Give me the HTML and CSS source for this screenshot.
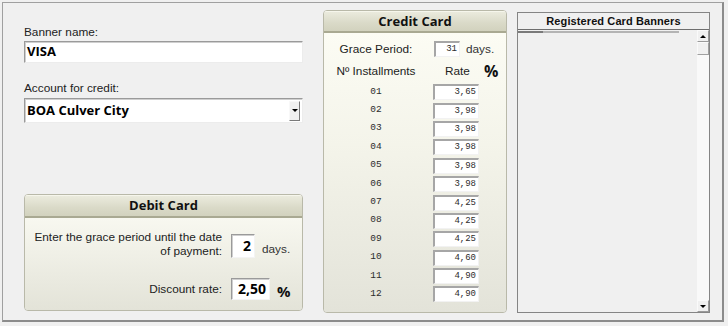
FILE: index.html
```html
<!DOCTYPE html>
<html>
<head>
<meta charset="utf-8">
<title>Card Banners</title>
<link rel="stylesheet" href="styles.css">
</head>
<body>
<div class="frame">
  <div class="left">
    <div class="lbl">Banner name:</div>
    <div class="field field-name">VISA</div>
    <div class="lbl lbl-account">Account for credit:</div>
    <div class="field combo">
      <span class="combo-text">BOA Culver City</span>
      <span class="combo-btn"><span class="arrow-down"></span></span>
    </div>

    <div class="panel debit">
      <div class="panel-head">Debit Card</div>
      <div class="debit-body">
        <div class="dlabel">Enter the grace period until the date<br>of payment:</div>
        <div class="dval">
          <div class="box box-days">2</div>
          <span class="unit">days.</span>
        </div>
        <div class="dlabel dlabel-rate">Discount rate:</div>
        <div class="dval dval-rate">
          <div class="box box-rate">2,50</div>
          <span class="unit pct">%</span>
        </div>
      </div>
    </div>
  </div>

  <div class="panel credit">
    <div class="panel-head">Credit Card</div>
    <div class="credit-body">
      <div class="crow crow-grace">
        <div class="ccol1">Grace Period:</div>
        <div class="grace-val">
          <div class="mini mini-grace">31</div>
          <span class="unit">days.</span>
        </div>
      </div>
      <div class="crow crow-head">
        <div class="ccol1">Nº Installments</div>
        <div class="ccol2 rate-head">Rate</div>
        <div class="ccol3 pct">%</div>
      </div>
      <div class="rates">
        <div class="rrow"><div class="ccol1 num">01</div><div class="mini">3,65</div></div>
        <div class="rrow"><div class="ccol1 num">02</div><div class="mini">3,98</div></div>
        <div class="rrow"><div class="ccol1 num">03</div><div class="mini">3,98</div></div>
        <div class="rrow"><div class="ccol1 num">04</div><div class="mini">3,98</div></div>
        <div class="rrow"><div class="ccol1 num">05</div><div class="mini">3,98</div></div>
        <div class="rrow"><div class="ccol1 num">06</div><div class="mini">3,98</div></div>
        <div class="rrow"><div class="ccol1 num">07</div><div class="mini">4,25</div></div>
        <div class="rrow"><div class="ccol1 num">08</div><div class="mini">4,25</div></div>
        <div class="rrow"><div class="ccol1 num">09</div><div class="mini">4,25</div></div>
        <div class="rrow"><div class="ccol1 num">10</div><div class="mini">4,60</div></div>
        <div class="rrow"><div class="ccol1 num">11</div><div class="mini">4,90</div></div>
        <div class="rrow"><div class="ccol1 num">12</div><div class="mini">4,90</div></div>
      </div>
    </div>
  </div>

  <div class="list">
    <div class="list-head">Registered Card Banners</div>
    <div class="list-rule"></div>
    <div class="list-body">
      <div class="list-items"></div>
      <div class="scroll">
        <div class="sbtn"><span class="arrow-up"></span></div>
        <div class="thumb"></div>
        <div class="track"></div>
        <div class="sbtn"><span class="arrow-down"></span></div>
      </div>
    </div>
  </div>
</div>
</body>
</html>
```

FILE: styles.css
```css
* {
  margin: 0;
  padding: 0;
  box-sizing: border-box;
}

body {
  background: #f0f0f0;
  font-family: "Liberation Sans", Arial, sans-serif;
  font-size: 11.8px;
  color: #222;
}

.frame {
  margin: 2px 0 0 2px;
  width: 722px;
  height: 320px;
  border: 1px solid #a0a0a0;
  border-right: 2px solid #8c8c8c;
  border-bottom: 2px solid #8c8c8c;
  box-shadow: 0 2px 0 #fafafa, 0 3px 0 #b4b4b4;
  display: flex;
  align-items: flex-start;
  padding: 7px 0 0 21px;
}

/* left column */

.left {
  width: 279px;
  margin-top: 15px;
  display: flex;
  flex-direction: column;
}

.lbl {
  line-height: 14px;
  height: 14px;
  color: #222;
}

.lbl-account {
  margin-top: 18px;
}

.field {
  background: #fff;
  border: 1px solid;
  border-color: #9a9a9a #ececec #ececec #9a9a9a;
  box-shadow: inset 1px 1px 0 #cfcfcf;
  font-family: "Open Sans", "DejaVu Sans", sans-serif;
  font-weight: 700;
  font-size: 13px;
  color: #000;
}

.field-name {
  margin-top: 2px;
  height: 22px;
  line-height: 19px;
  padding-left: 2px;
}

.combo {
  margin-top: 3px;
  height: 25px;
  display: flex;
  align-items: center;
  justify-content: space-between;
  padding-left: 2px;
}

.combo-text {
  line-height: 20px;
  margin-top: -1px;
}

.combo-btn {
  width: 11px;
  height: 20px;
  margin-right: 2px;
  background: #f0f0f0;
  border: 1px solid;
  border-color: #f8f8f8 #7a7a7a #7a7a7a #f8f8f8;
  display: flex;
  align-items: center;
  justify-content: center;
}

.arrow-down {
  width: 0;
  height: 0;
  border-left: 3px solid transparent;
  border-right: 3px solid transparent;
  border-top: 3px solid #000;
}

.arrow-up {
  width: 0;
  height: 0;
  border-left: 3px solid transparent;
  border-right: 3px solid transparent;
  border-bottom: 3px solid #000;
}

/* panels */

.panel {
  border: 1px solid #b9b9a9;
  border-radius: 4px;
  overflow: hidden;
}

.panel-head {
  background: linear-gradient(#ececdf, #dadac8 60%, #d2d2be);
  border-bottom: 2px solid #a9a992;
  box-shadow: inset 0 1px 0 #f6f6ec;
  text-align: center;
  font-family: "Open Sans", "DejaVu Sans", sans-serif;
  font-weight: 700;
  font-size: 13px;
  color: #111;
}

.debit {
  margin-top: 71px;
  height: 117px;
}

.debit .panel-head {
  height: 23px;
  line-height: 21px;
}

.debit-body {
  height: 92px;
  background: linear-gradient(#f8f8f0, #e3e3d8);
  display: grid;
  grid-template-columns: 197px auto;
  grid-template-rows: 28px 22px;
  column-gap: 9px;
  row-gap: 20px;
  padding-top: 12px;
  align-items: end;
}

.dlabel {
  text-align: right;
  line-height: 14px;
  color: #222;
}

.dlabel-rate {
  align-self: center;
}

.dval {
  display: flex;
  align-items: flex-end;
  gap: 7px;
}

.dval-rate {
  align-self: stretch;
  align-items: center;
}

.box {
  background: #fff;
  border: 1px solid;
  border-color: #9a9a9a #f4f4f4 #f4f4f4 #9a9a9a;
  box-shadow: inset 1px 1px 0 #cfcfcf;
  font-family: "Open Sans", "DejaVu Sans", sans-serif;
  font-weight: 700;
  font-size: 14px;
  color: #000;
  text-align: right;
  padding-right: 3px;
}

.box-days {
  width: 24px;
  height: 24px;
  line-height: 21px;
}

.box-rate {
  width: 39px;
  height: 22px;
  line-height: 19px;
}

.unit {
  color: #333;
  line-height: 14px;
}

.dval .unit {
  margin-bottom: 2px;
}

.dval-rate .unit {
  margin-bottom: -3px;
}

.pct {
  font-family: "Open Sans", "DejaVu Sans", sans-serif;
  font-weight: 700;
  font-size: 15px;
  color: #111;
}

/* credit card */

.credit {
  margin-left: 20px;
  width: 184px;
  height: 303px;
  display: flex;
  flex-direction: column;
}

.credit .panel-head {
  height: 22px;
  line-height: 21px;
}

.credit-body {
  flex: 1;
  background: linear-gradient(#fcfcf4, #f4f4ea 40%, #e3e3d9);
  padding-top: 8px;
}

.crow {
  display: flex;
  align-items: center;
  height: 16px;
}

.ccol1 {
  width: 104px;
  text-align: center;
  color: #222;
}

.grace-val {
  margin-left: 6px;
  display: flex;
  align-items: center;
  gap: 6px;
}

.crow-head {
  margin-top: 6px;
}

.rate-head {
  width: 46px;
  margin-left: 5px;
  padding-left: 12px;
}

.ccol3.pct {
  margin-left: 5px;
  font-size: 16px;
  line-height: 14px;
}

.rates {
  margin-top: 5px;
}

.rrow {
  display: flex;
  align-items: center;
  height: 18.4px;
}

.num {
  font-family: "Liberation Mono", "Courier New", monospace;
  font-size: 9.5px;
  color: #2c2c2c;
  margin-top: -4px;
}

.mini {
  margin-left: 5px;
  width: 46px;
  height: 16px;
  margin-top: -2px;
  background: #fff;
  border: 1px solid;
  border-top-width: 2px;
  border-left-width: 2px;
  border-color: #a6a6a6 #f2f2f2 #f2f2f2 #a6a6a6;
  font-family: "Liberation Mono", "Courier New", monospace;
  font-size: 9px;
  line-height: 13px;
  color: #2c2c2c;
  text-align: right;
  padding-right: 2px;
}

.mini-grace {
  margin: 0;
  width: 26px;
  height: 16px;
}

/* registered list */

.list {
  margin-left: 10px;
  margin-top: 2px;
  width: 193px;
  height: 301px;
  border: 1px solid #858585;
  display: flex;
  flex-direction: column;
}

.list-head {
  height: 17px;
  line-height: 16px;
  border-bottom: 1px solid #6e6e6e;
  text-align: center;
  font-family: "Liberation Sans", Arial, sans-serif;
  font-weight: 700;
  font-size: 11px;
  color: #111;
  letter-spacing: 0.1px;
}

.list-rule {
  height: 2px;
  margin-top: 1px;
  width: 161px;
  background: linear-gradient(to right, #7a7a7a 25px, #b4b4b4 25px);
}

.list-body {
  flex: 1;
  display: flex;
  margin-top: -3px;
}

.list-items {
  flex: 1;
}

.scroll {
  width: 12px;
  display: flex;
  flex-direction: column;
  background: #f8f8f8;
}

.sbtn {
  height: 12px;
  background: #f0f0f0;
  border: 1px solid;
  border-color: #fafafa #9a9a9a #9a9a9a #fafafa;
  display: flex;
  align-items: center;
  justify-content: center;
}

.thumb {
  height: 13px;
  background: #f0f0f0;
  border: 1px solid;
  border-color: #fafafa #a0a0a0 #a0a0a0 #fafafa;
}

.track {
  flex: 1;
  background: #f9f9f9;
}
```
